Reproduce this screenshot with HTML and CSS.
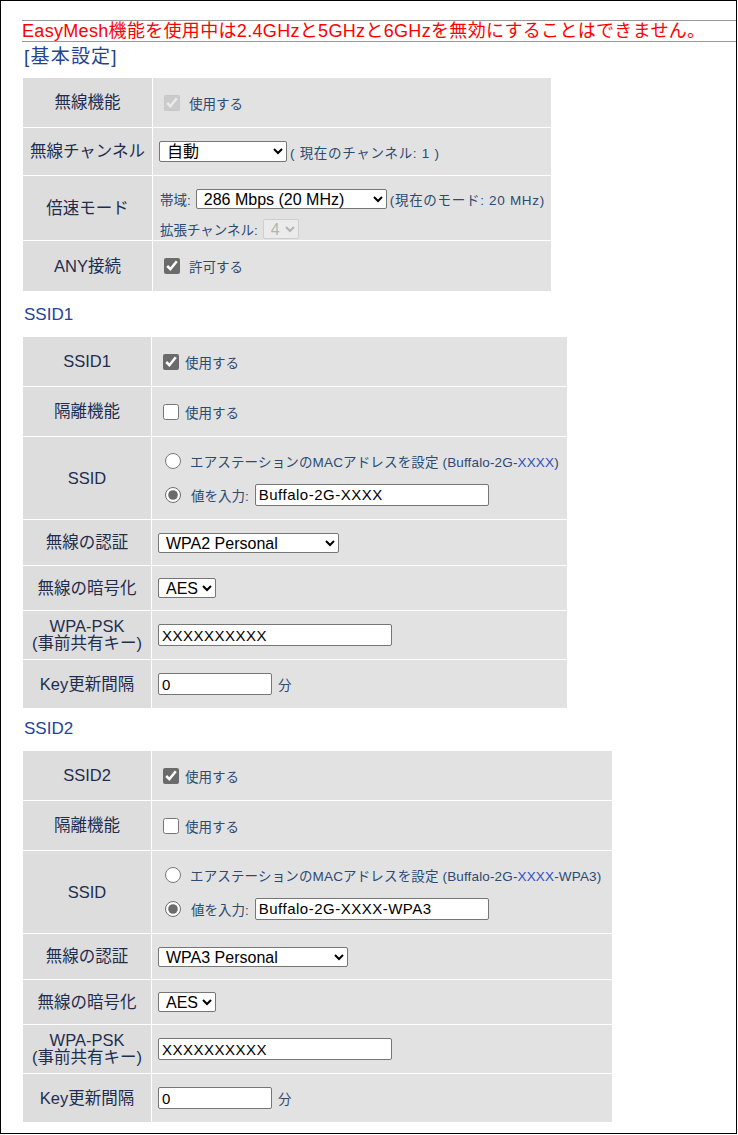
FILE: index.html
```html
<!DOCTYPE html>
<html lang="ja">
<head>
<meta charset="utf-8">
<title>無線設定</title>
<link rel="stylesheet" href="styles.css">
</head>
<body>
<div class="frame">
  <div class="notice">EasyMesh機能を使用中は2.4GHzと5GHzと6GHzを無効にすることはできません。</div>
  <h2 class="section-title">[基本設定]</h2>

  <table class="form form-basic">
    <tr class="h50">
      <th>無線機能</th>
      <td><label class="check check-wide"><input type="checkbox" checked disabled><span>使用する</span></label></td>
    </tr>
    <tr class="h48">
      <th>無線チャンネル</th>
      <td><div class="line"><select class="sel-channel"><option>自動</option></select><span class="note">( 現在のチャンネル: 1 )</span></div></td>
    </tr>
    <tr class="h65">
      <th>倍速モード</th>
      <td class="cell-top">
        <div class="line"><span class="txt">帯域:</span><select class="sel-band"><option>286 Mbps (20 MHz)</option></select><span class="note">(現在のモード: 20 MHz)</span></div>
        <div class="line line-gap"><span class="txt">拡張チャンネル:</span><select class="sel-ext" disabled><option>4</option></select></div>
      </td>
    </tr>
    <tr class="h50">
      <th>ANY接続</th>
      <td><label class="check check-wide"><input type="checkbox" checked><span>許可する</span></label></td>
    </tr>
  </table>

  <h3 class="sub-title sub-first">SSID1</h3>
  <table class="form form-ssid form-ssid1">
    <tr class="h50">
      <th>SSID1</th>
      <td><label class="check check-tight"><input type="checkbox" checked><span>使用する</span></label></td>
    </tr>
    <tr class="h50">
      <th>隔離機能</th>
      <td><label class="check check-tight"><input type="checkbox"><span>使用する</span></label></td>
    </tr>
    <tr class="h83">
      <th>SSID</th>
      <td>
        <label class="line radio"><input type="radio" name="ssid1"><span class="desc">エアステーションのMACアドレスを設定 (Buffalo-2G-<span class="hl">XXXX</span>)</span></label>
        <div class="line line-input radio"><input type="radio" name="ssid1" checked><span class="txt txt-value">値を入力:</span><input type="text" class="in-ssid" value="Buffalo-2G-XXXX"></div>
      </td>
    </tr>
    <tr class="h46">
      <th>無線の認証</th>
      <td><select class="sel-auth"><option>WPA2 Personal</option></select></td>
    </tr>
    <tr class="h45">
      <th>無線の暗号化</th>
      <td><select class="sel-aes"><option>AES</option></select></td>
    </tr>
    <tr class="h49">
      <th class="two-line">WPA-PSK<br>(事前共有キー)</th>
      <td><input type="text" class="in-psk" value="XXXXXXXXXX"></td>
    </tr>
    <tr class="h48">
      <th>Key更新間隔</th>
      <td><div class="line line-input"><input type="text" class="in-key" value="0"><span class="unit">分</span></div></td>
    </tr>
  </table>

  <h3 class="sub-title sub-second">SSID2</h3>
  <table class="form form-ssid form-ssid2">
    <tr class="h50">
      <th>SSID2</th>
      <td><label class="check check-tight"><input type="checkbox" checked><span>使用する</span></label></td>
    </tr>
    <tr class="h50">
      <th>隔離機能</th>
      <td><label class="check check-tight"><input type="checkbox"><span>使用する</span></label></td>
    </tr>
    <tr class="h83">
      <th>SSID</th>
      <td>
        <label class="line radio"><input type="radio" name="ssid2"><span class="desc">エアステーションのMACアドレスを設定 (Buffalo-2G-<span class="hl">XXXX</span>-WPA3)</span></label>
        <div class="line line-input radio"><input type="radio" name="ssid2" checked><span class="txt txt-value">値を入力:</span><input type="text" class="in-ssid" value="Buffalo-2G-XXXX-WPA3"></div>
      </td>
    </tr>
    <tr class="h46">
      <th>無線の認証</th>
      <td><select class="sel-auth sel-auth3"><option>WPA3 Personal</option></select></td>
    </tr>
    <tr class="h45">
      <th>無線の暗号化</th>
      <td><select class="sel-aes"><option>AES</option></select></td>
    </tr>
    <tr class="h49">
      <th class="two-line">WPA-PSK<br>(事前共有キー)</th>
      <td><input type="text" class="in-psk" value="XXXXXXXXXX"></td>
    </tr>
    <tr class="h48">
      <th>Key更新間隔</th>
      <td><div class="line line-input"><input type="text" class="in-key" value="0"><span class="unit">分</span></div></td>
    </tr>
  </table>
</div>
</body>
</html>
```

FILE: styles.css
```css
* { box-sizing: border-box; }

html, body {
  margin: 0;
  padding: 0;
  background: #fff;
}

body {
  font-family: "Liberation Sans", "Noto Sans CJK JP", sans-serif;
  color: #1f2d4f;
}

.frame {
  width: 737px;
  height: 1134px;
  border: 1px solid #000;
  padding-left: 21px;
  overflow: hidden;
}

.notice {
  margin-top: 19px;
  height: 22px;
  border-top: 1px solid #9a9a9a;
  border-bottom: 1px solid #9a9a9a;
  line-height: 20px;
  font-size: 18px;
  letter-spacing: 0.32px;
  color: #ff0000;
  white-space: nowrap;
}

.section-title {
  margin: 3px 0 9px 2px;
  font-size: 19px;
  line-height: 24px;
  letter-spacing: 1.2px;
  font-weight: normal;
  color: #25448f;
}

.sub-title {
  margin: 0 0 10px 2px;
  font-size: 17px;
  line-height: 24px;
  font-weight: normal;
  color: #23449a;
}
.sub-first { margin-top: 12px; }
.sub-second { margin-top: 9px; }

/* tables */
.form {
  border-collapse: separate;
  border-spacing: 0;
  table-layout: fixed;
  margin-left: 1px;
}
.form-basic { width: 528px; }
.form-ssid1 { width: 544px; }
.form-ssid2 { width: 589px; }

.form th {
  width: 129px;
  padding: 0;
  background: #dddddd;
  border-right: 1px solid #fff;
  border-bottom: 1px solid #fff;
  font-weight: normal;
  font-size: 16.5px;
  line-height: 17px;
  color: #1f2d4f;
  text-align: center;
  vertical-align: middle;
  white-space: nowrap;
}
.form-basic th { width: 130px; }

.form td {
  padding: 0 0 0 6px;
  background: #e2e2e2;
  border-bottom: 1px solid #fff;
  vertical-align: middle;
  font-size: 13.5px;
  color: #2c4a72;
  white-space: nowrap;
}
.form tr:last-child > th,
.form tr:last-child > td { border-bottom: 0; }

.form td.cell-top {
  vertical-align: top;
  padding-top: 13px;
}

.h45 { height: 45px; }
.h46 { height: 46px; }
.h48 { height: 48px; }
.h49 { height: 49px; }
.h50 { height: 50px; }
.h65 { height: 65px; }
.h83 { height: 83px; }

.line {
  display: flex;
  align-items: center;
  height: 20px;
}
.line-gap { margin-top: 10px; }
.line-input { height: 22px; }
.radio + .radio { margin-top: 13px; }

.txt { margin-left: 1px; }
.txt-value { margin-right: 6px; }
.note {
  margin-left: 3px;
  letter-spacing: 0.7px;
}

/* checkboxes & radios */
.check {
  display: flex;
  align-items: center;
}
.check input,
.radio input[type="radio"] {
  width: 16px;
  height: 16px;
  margin: 0;
  accent-color: #6b6b6b;
}
.check-wide input { margin: 0 9px 0 5px; }
.check-tight input { margin: 0 6px 0 5px; }
.radio input[type="radio"] { margin: 0 9px 0 7px; }

.desc { letter-spacing: 0.15px; }
.hl { color: #2d50c0; }

/* selects */
select {
  height: 20px;
  margin: 0;
  padding: 0 0 0 3px;
  font-family: "Liberation Sans", "Noto Sans CJK JP", sans-serif;
  font-size: 16px;
  color: #000;
  background: #fff;
  border: 1px solid #767676;
  border-radius: 2px;
}
.sel-channel { width: 128px; height: 21px; }
.sel-band { width: 191px; margin-left: 5px; }
.sel-ext {
  width: 36px;
  margin-left: 5px;
}
.sel-ext:disabled {
  color: #a0a0a0;
  background: #f0f0f0;
  border-color: #c6c6c6;
}
.sel-auth { width: 181px; }
.sel-auth3 { width: 190px; }
.sel-aes { width: 58px; }

/* text inputs */
input[type="text"] {
  height: 22px;
  margin: 0;
  padding: 0 3px;
  font-family: "Liberation Sans", "Noto Sans CJK JP", sans-serif;
  font-size: 15px;
  letter-spacing: 0.5px;
  color: #000;
  background: #fff;
  border: 1px solid #767676;
  border-radius: 2px;
}
.in-ssid { width: 234px; }
.in-psk { width: 234px; height: 23px; }
.in-key { width: 114px; }
.unit { margin-left: 6px; }
```
